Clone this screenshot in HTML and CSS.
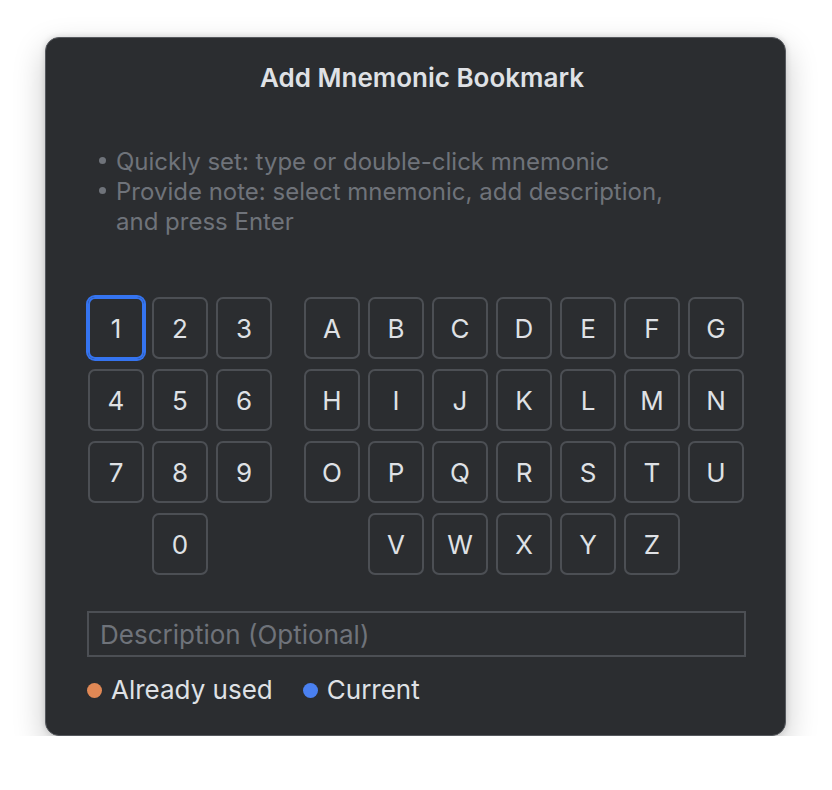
FILE: index.html
```html
<!DOCTYPE html>
<html>
<head>
<meta charset="utf-8">
<link rel="stylesheet" href="styles.css">
</head>
<body>
<div class="window">
  <h1 class="title">Add Mnemonic Bookmark</h1>
  <ul class="hints">
    <li>Quickly set: type or double-click mnemonic</li>
    <li>Provide note: select mnemonic, add description,<br>and press Enter</li>
  </ul>
  <div class="keys">
    <div class="grid nums">
      <div class="key current">1</div><div class="key">2</div><div class="key">3</div>
      <div class="key">4</div><div class="key">5</div><div class="key">6</div>
      <div class="key">7</div><div class="key">8</div><div class="key">9</div>
      <div class="key c2">0</div>
    </div>
    <div class="grid letters">
      <div class="key">A</div><div class="key">B</div><div class="key">C</div><div class="key">D</div><div class="key">E</div><div class="key">F</div><div class="key">G</div>
      <div class="key">H</div><div class="key">I</div><div class="key">J</div><div class="key">K</div><div class="key">L</div><div class="key">M</div><div class="key">N</div>
      <div class="key">O</div><div class="key">P</div><div class="key">Q</div><div class="key">R</div><div class="key">S</div><div class="key">T</div><div class="key">U</div>
      <div class="key c2">V</div><div class="key">W</div><div class="key">X</div><div class="key">Y</div><div class="key">Z</div>
    </div>
  </div>
  <input class="desc" type="text" placeholder="Description (Optional)">
  <div class="legend">
    <span class="item"><span class="dot used"></span>Already used</span>
    <span class="item"><span class="dot cur"></span>Current</span>
  </div>
</div>
</body>
</html>
```
FILE: styles.css
```css
* { box-sizing: border-box; }
html, body { margin: 0; padding: 0; background: #ffffff; }
body {
  font-family: Inter, "Noto Sans", "Liberation Sans", sans-serif;
  padding: 37px 0 0 45px;
}
.window {
  width: 741px;
  height: 699px;
  background: #2b2d30;
  border: 1px solid #56595e;
  border-radius: 14px;
  box-shadow: 0 12px 32px rgba(0,0,0,0.22), 0 0 6px rgba(0,0,0,0.15);
  padding: 24px 40px 0 41px;
  display: flex;
  flex-direction: column;
}
.title {
  margin: 0;
  text-align: center;
  font-size: 26px;
  font-weight: 600;
  line-height: 32px;
  color: #dfe1e5;
  padding-left: 12px;
}
.hints {
  list-style: none;
  margin: 53px 0 0 0;
  padding: 0 0 0 29px;
  font-size: 24px;
  line-height: 30px;
  color: #6f737a;
}
.hints li { position: relative; }
.hints li::before {
  content: "";
  position: absolute;
  left: -17px;
  top: 10px;
  width: 7px;
  height: 7px;
  border-radius: 50%;
  background: #6f737a;
}
.keys {
  display: flex;
  gap: 32px;
  margin: 60px 0 0 1px;
}
.grid {
  display: grid;
  grid-auto-rows: 62px;
  column-gap: 8px;
  row-gap: 10px;
}
.nums { grid-template-columns: repeat(3, 56px); }
.letters { grid-template-columns: repeat(7, 56px); }
.c2 { grid-column-start: 2; }
.key {
  border: 2px solid #4c4f54;
  border-radius: 7px;
  display: flex;
  align-items: center;
  justify-content: center;
  font-size: 26px;
  color: #dfe1e5;
}
.key.current {
  border-color: #3574f0;
  box-shadow: 0 0 0 2px #3574f0;
}
.desc {
  margin-top: 36px;
  width: 659px;
  height: 46px;
  background: transparent;
  border: 2px solid #4c4f54;
  border-radius: 0;
  padding: 0 11px;
  font-family: inherit;
  font-size: 26px;
  color: #dfe1e5;
  outline: none;
}
.desc::placeholder { color: #6f737a; }
.legend {
  display: flex;
  gap: 30px;
  margin-top: 17px;
  font-size: 26px;
  line-height: 32px;
  color: #dfe1e5;
}
.item { display: flex; align-items: center; gap: 9px; }
.dot {
  width: 15px;
  height: 15px;
  border-radius: 50%;
  display: inline-block;
}
.dot.used { background: #e08855; }
.dot.cur { background: #4a80f0; }
```
